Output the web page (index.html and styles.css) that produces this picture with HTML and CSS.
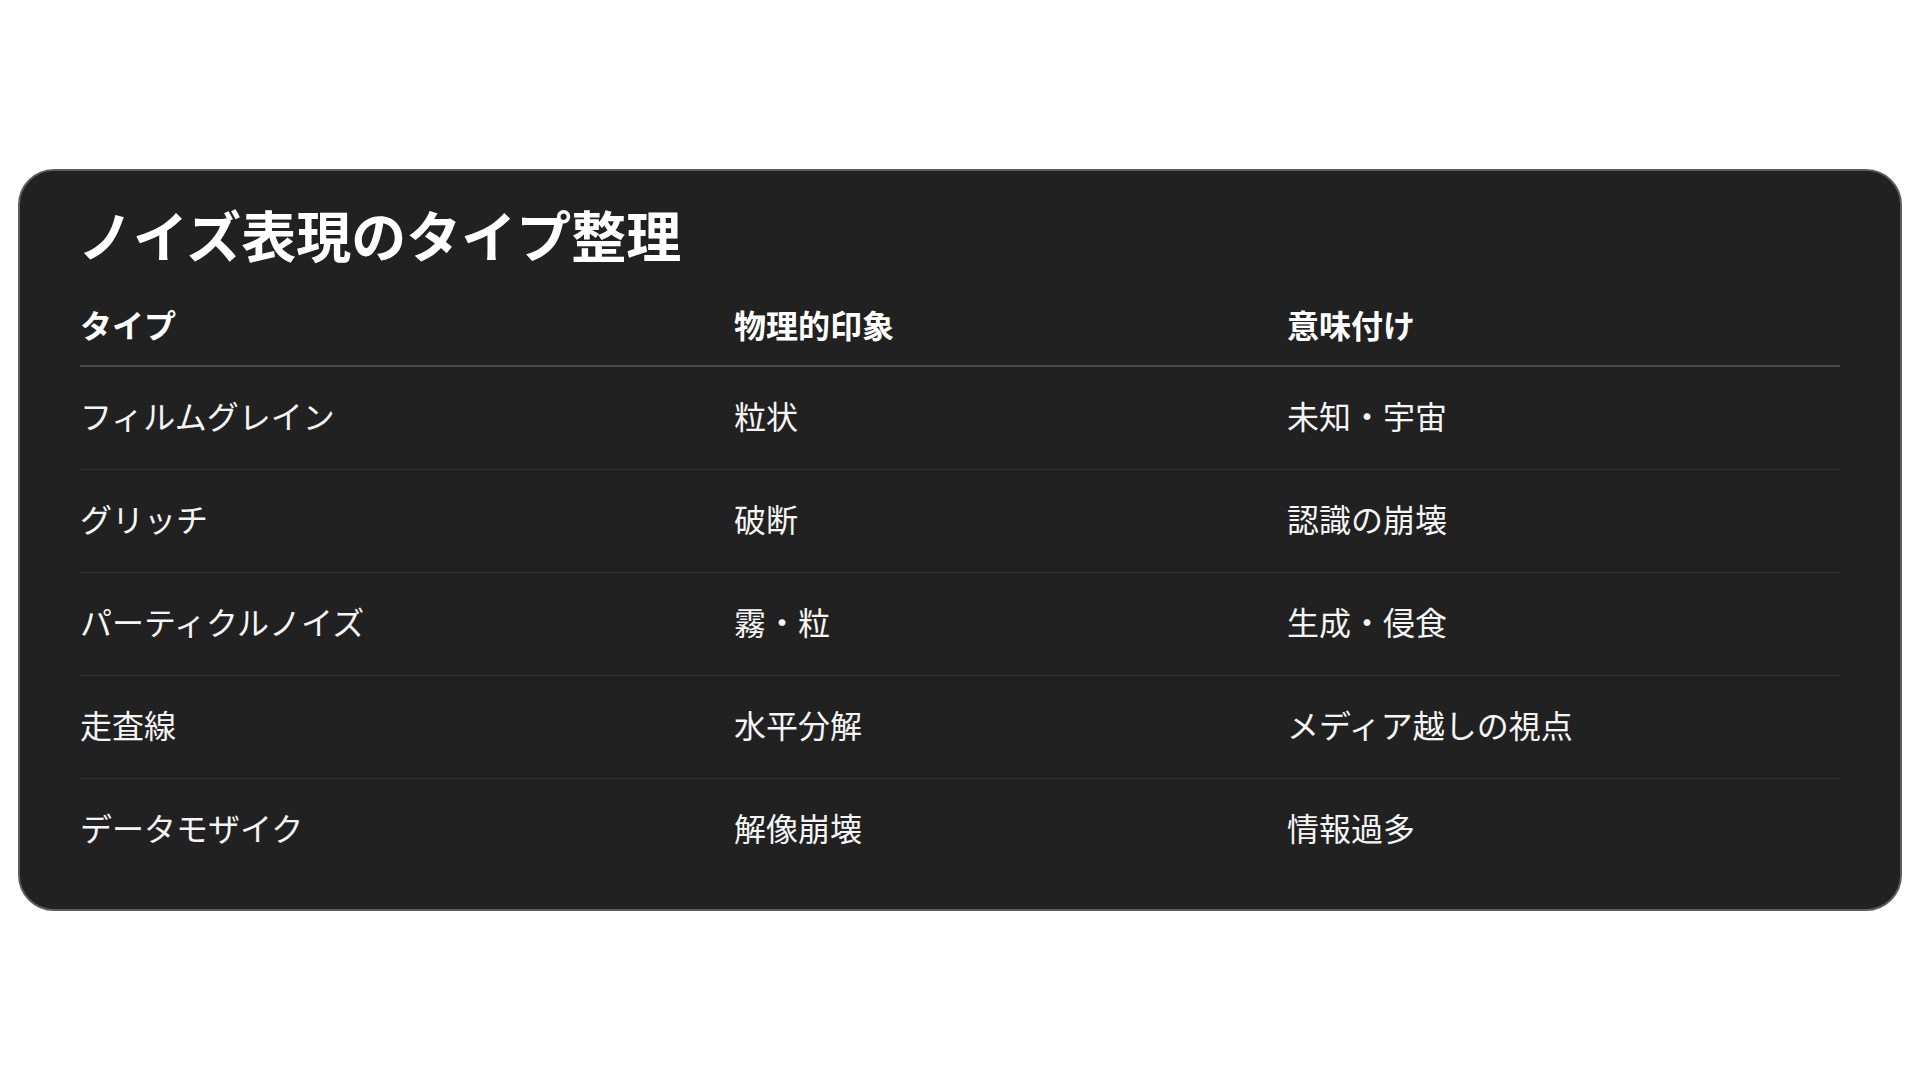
FILE: index.html
```html
<!DOCTYPE html>
<html lang="ja">
  <head>
    <meta charset="utf-8" />
    <link rel="stylesheet" href="styles.css">
    <title>ノイズ表現のタイプ整理</title>
  </head>
  <body>
    <div class="card">
      <h1 class="title">ノイズ表現のタイプ整理</h1>
      <div class="noiseTable">
        <div class="cell head">タイプ</div>
        <div class="cell head">物理的印象</div>
        <div class="cell head">意味付け</div>

        <div class="cell">フィルムグレイン</div>
        <div class="cell">粒状</div>
        <div class="cell">未知・宇宙</div>

        <div class="cell">グリッチ</div>
        <div class="cell">破断</div>
        <div class="cell">認識の崩壊</div>

        <div class="cell">パーティクルノイズ</div>
        <div class="cell">霧・粒</div>
        <div class="cell">生成・侵食</div>

        <div class="cell">走査線</div>
        <div class="cell">水平分解</div>
        <div class="cell">メディア越しの視点</div>

        <div class="cell last">データモザイク</div>
        <div class="cell last">解像崩壊</div>
        <div class="cell last">情報過多</div>
      </div>
    </div>
  </body>
</html>
```

FILE: styles.css
```css
html,
body {
  margin: 0;
  background-color: #ffffff;
}

body {
  min-height: 100vh;
  display: flex;
  align-items: center;
  padding: 0 18px;
  box-sizing: border-box;
  font-family: "Noto Sans CJK JP", "Noto Sans", sans-serif;
}

.card {
  width: 100%;
  box-sizing: border-box;
  background-color: #212121;
  border: 2px solid #5c5c5c;
  border-radius: 36px;
  padding: 29px 60px 28px;
  color: #f5f5f5;
}

.title {
  margin: 0 0 0 -2px;
  font-size: 55px;
  font-weight: 700;
  line-height: 1.2;
  color: #ffffff;
}

.noiseTable {
  display: grid;
  grid-template-columns: 654px 553px 1fr;
  margin-top: 33px;
}

.cell {
  font-size: 32px;
  line-height: 50px;
  padding: 23px 0 29px;
  border-bottom: 1px solid #333333;
}

.head {
  font-weight: 700;
  padding: 0 0 16px;
  border-bottom: 2px solid #4a4a4a;
  color: #ffffff;
}

.last {
  border-bottom: none;
}
```
